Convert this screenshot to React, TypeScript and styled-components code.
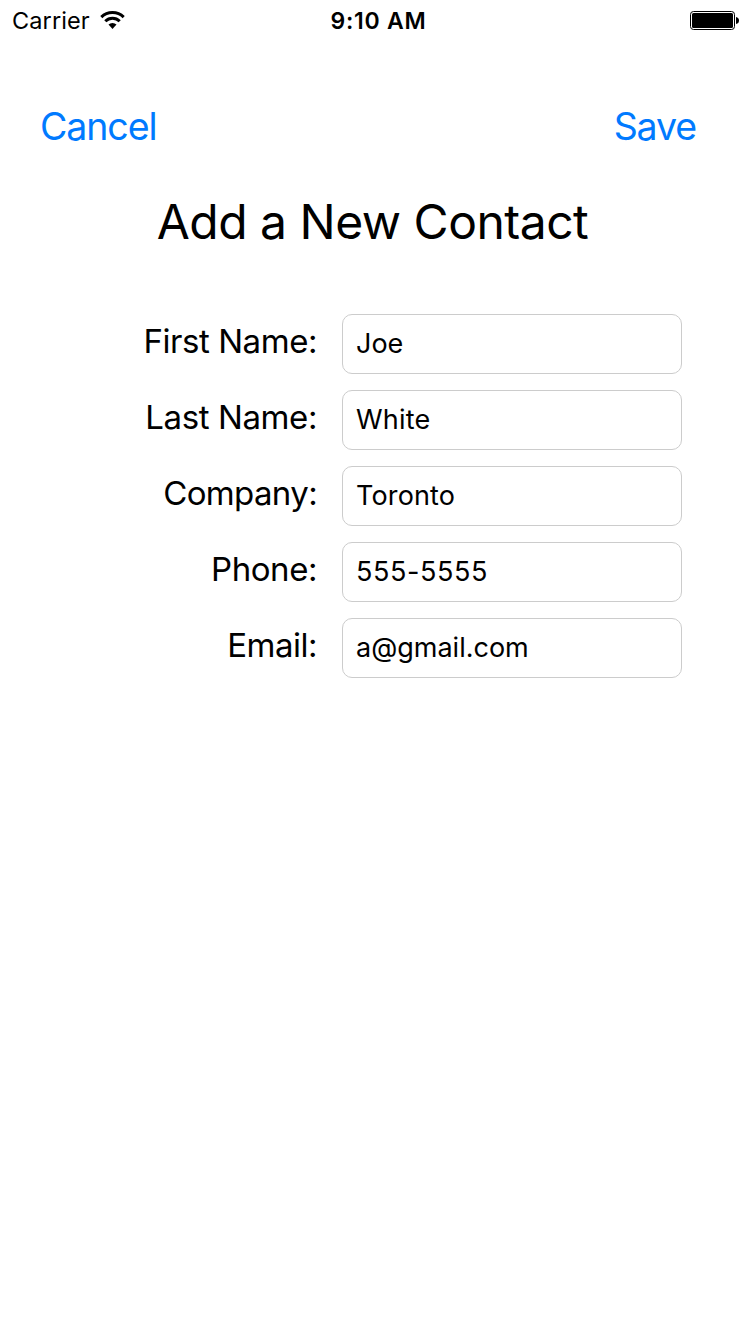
import React from "react";
import styled, { createGlobalStyle } from "styled-components";

const GlobalStyle = createGlobalStyle`
  * { box-sizing: border-box; }
  body { margin: 0; background: #fff; color: #000; font-family: Inter, "Liberation Sans", sans-serif; }
`;

const Screen = styled.main`
  width: 750px;
  min-height: 1334px;
  background: #fff;
`;

const StatusBar = styled.header`
  display: grid;
  grid-template-columns: 1fr auto 1fr;
  align-items: center;
  height: 42px;
  padding: 0 10px 0 12px;
  font-size: 23.5px;
  line-height: 40px;
  white-space: nowrap;
`;

const Carrier = styled.div`
  display: flex;
  align-items: center;
  gap: 10px;
`;

const CarrierName = styled.span`
  width: 78px;
  letter-spacing: 0.1px;
`;

const Clock = styled.time`
  font-size: 23px;
  font-weight: 600;
  padding-left: 5px;
  letter-spacing: 0.75px;
`;

const BatterySlot = styled.div`
  display: flex;
  justify-content: flex-end;
`;

const Toolbar = styled.nav`
  display: flex;
  justify-content: space-between;
  padding: 61px 54px 0 40px;
`;

const ToolbarButton = styled.button`
  border: 0;
  padding: 0;
  background: none;
  color: #007aff;
  font-family: inherit;
  font-size: 37.5px;
  line-height: 48px;
  letter-spacing: -1.1px;
`;

const Title = styled.h1`
  margin: 41px 5px 0 0;
  text-align: center;
  font-size: 48px;
  line-height: 60px;
  font-weight: 400;
  letter-spacing: -0.5px;
`;

const Form = styled.form`
  display: flex;
  flex-direction: column;
  gap: 16px;
  padding-top: 62px;
`;

const Field = styled.label`
  display: grid;
  grid-template-columns: 317px 340px;
  column-gap: 25px;
`;

const FieldName = styled.span<{ $tracking: number }>`
  text-align: right;
  font-size: 33px;
  line-height: 55px;
  letter-spacing: ${({ $tracking }) => $tracking}px;
`;

const TextInput = styled.input<{ $tracking: number }>`
  height: 60px;
  border: 1px solid #ccc;
  border-radius: 10px;
  padding: 0 13px 2px;
  outline: none;
  background: #fff;
  color: #000;
  font-family: inherit;
  font-size: 27px;
  letter-spacing: ${({ $tracking }) => $tracking}px;
`;

const fields = [
  { name: "First Name:", nameTracking: -0.45, value: "Joe", valueTracking: 0 },
  { name: "Last Name:", nameTracking: -0.4, value: "White", valueTracking: 0.2 },
  { name: "Company:", nameTracking: -0.65, value: "Toronto", valueTracking: 0.15 },
  { name: "Phone:", nameTracking: -0.45, value: "555-5555", valueTracking: 0.6 },
  { name: "Email:", nameTracking: -0.5, value: "a@gmail.com", valueTracking: 0 },
];

export default function App() {
  return (
    <Screen>
      <GlobalStyle />
      <StatusBar>
        <Carrier>
          <CarrierName>Carrier</CarrierName>
          <svg width="26" height="20" viewBox="0 0 26 20" fill="none" stroke="#000" strokeWidth="3">
            <path d="M1.3 6.1A16 16 0 0 1 23.7 6.1" />
            <path d="M5.3 10.2A10.2 10.2 0 0 1 19.7 10.2" />
            <path d="M8.5 13.6A5.7 5.7 0 0 1 16.5 13.6L12.5 18Z" fill="#000" stroke="none" />
          </svg>
        </Carrier>
        <Clock>9:10 AM</Clock>
        <BatterySlot>
          <svg width="50" height="20" viewBox="0 0 50 20">
            <rect x="0.5" y="0.5" width="44" height="18" rx="3" fill="none" stroke="#000" />
            <rect x="2" y="2" width="41" height="15" rx="1.5" />
            <path d="M46 6Q49 6.5 49 9.5T46 13Z" />
          </svg>
        </BatterySlot>
      </StatusBar>
      <Toolbar>
        <ToolbarButton>Cancel</ToolbarButton>
        <ToolbarButton>Save</ToolbarButton>
      </Toolbar>
      <Title>Add a New Contact</Title>
      <Form>
        {fields.map((field) => (
          <Field key={field.name}>
            <FieldName $tracking={field.nameTracking}>{field.name}</FieldName>
            <TextInput $tracking={field.valueTracking} defaultValue={field.value} spellCheck={false} />
          </Field>
        ))}
      </Form>
    </Screen>
  );
}
